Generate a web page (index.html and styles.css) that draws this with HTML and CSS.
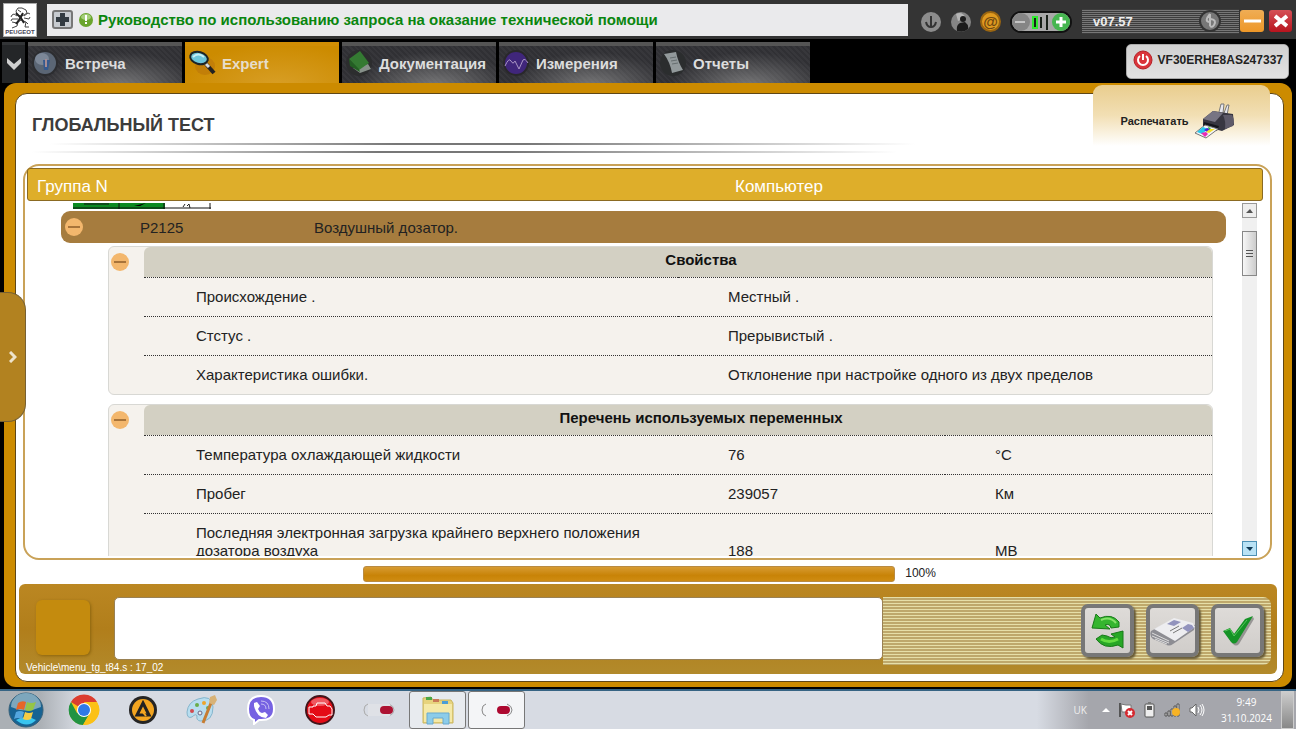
FILE: index.html
```html
<!DOCTYPE html>
<html lang="ru">
<head>
    <meta charset="UTF-8">
    <meta name="viewport" content="width=device-width, initial-scale=1.0">
    <title>Глобальный тест</title>
    <link rel="stylesheet" href="styles.css">
</head>
<body>
    <!-- Top bar -->
    <header class="top-bar">
        <div class="brand">
            <svg width="24" height="22" viewBox="0 0 24 22" fill="none" stroke="#444" stroke-width="1">
                <path d="M8 4l2-3 4 0 4 2 1 3-3 2-3 1-4-1zM10 3l3 2M14 8l-1 5-4 3-5-1M9 9L6 7 4 8l-1 2M10 12l-6 0-1 2M13 13l5 2-1 5 4 0M10 15l-1 4-5 2M16 9l4-3 2 1M16 11l5 1 1-2M18 15l2 2"/>
                <path d="M8 6l5 5 3 5M15 6l-4 7-3 4" stroke="#222" stroke-width="2"/>
            </svg>
            <span>PEUGEOT</span>
        </div>
        <div class="message">
            <button class="plus-button" aria-label="Добавить">
                <svg width="13" height="13" viewBox="0 0 13 13"><path d="M4 0h5v4h4v5H9v4H4V9H0V4h4z" fill="#333b42"/></svg>
            </button>
            <svg class="info" width="14" height="14" viewBox="0 0 14 14">
                <circle cx="7" cy="7" r="7" fill="#6aa52d"/>
                <ellipse cx="7" cy="4" rx="5" ry="3" fill="#a5cf7c"/>
                <path d="M6 2h2v6H6zM6 9h2v2H6z" fill="#fff"/>
            </svg>
            <span>Руководство по использованию запроса на оказание технической помощи</span>
        </div>
        <div class="tools">
            <button class="round" aria-label="Загрузка">
                <svg width="20" height="20" viewBox="0 0 20 20"><circle cx="10" cy="10" r="10" fill="#8c8c8c"/><path d="M10 4v11M5 10q1 5 5 5t5-5" fill="none" stroke="#333" stroke-width="2"/></svg>
            </button>
            <button class="round" aria-label="Пользователь">
                <svg width="20" height="20" viewBox="0 0 20 20"><circle cx="10" cy="10" r="10" fill="#858585"/><path d="M5 2q6-3 10 4L7 9z" fill="#b5b5b5"/><circle cx="12" cy="7" r="3" fill="#1c1c1c"/><path d="M6 19q-1-6 3-8l5-1q4 3 3 7-4 4-11 2z" fill="#1c1c1c"/></svg>
            </button>
            <button class="round at" aria-label="Почта">@</button>
            <div class="level">
                <svg width="62" height="22" viewBox="0 0 62 22">
                    <rect x="1" y="1" width="60" height="20" rx="10" fill="#a8a8a8" stroke="#111" stroke-width="2"/>
                    <circle cx="11" cy="11" r="9" fill="#858585"/>
                    <path d="M5 11h10" stroke="#c4c4c4" stroke-width="2"/>
                    <path d="M25 5v13" stroke="#30e830" stroke-width="6"/>
                    <path d="M25 7v9M31 6v11M37 4v15" stroke="#182018" stroke-width="2"/>
                    <circle cx="51" cy="11" r="9" fill="#46b650"/>
                    <path d="M51 6v10M46 11h10" stroke="#fff" stroke-width="3"/>
                </svg>
            </div>
        </div>
        <div class="version">
            <span>v07.57</span>
            <svg width="23" height="23" viewBox="0 0 23 23"><circle cx="11" cy="11" r="10" fill="#777" stroke="#333" stroke-width="2"/><path d="M11 4v12M11 4q-6 7-1 8M12 9q6 1 3 6-2 3-4 1" fill="none" stroke="#bbb" stroke-width="2"/></svg>
        </div>
        <button class="window-button minimize" aria-label="Свернуть"><svg width="17" height="4"><path d="M0 2h17" stroke="#fff" stroke-width="3"/></svg></button>
        <button class="window-button close" aria-label="Закрыть"><svg width="14" height="14" viewBox="0 0 14 14"><path d="M1 2l12 10M13 2L1 12" stroke="#fff" stroke-width="4"/></svg></button>
    </header>

    <!-- Tabs -->
    <nav class="tabs">
        <button class="tab-arrow" aria-label="Меню">
            <svg width="14" height="12" viewBox="0 0 14 12"><path d="M0 0l7 6 7-6v5l-7 7-7-7z" fill="#d0d0d0"/></svg>
        </button>
        <a href="#" class="tab">
            <svg width="28" height="28" viewBox="0 0 28 28"><circle cx="14" cy="14" r="13" fill="#2c2d30"/><circle cx="14" cy="14" r="11" fill="#5b6675"/><ellipse cx="11" cy="10" rx="7" ry="6" fill="#7c8797"/><path d="M12 11h7l-2 10h-4z" fill="#35598e"/><path d="M15 10v8" stroke="#a68c94" stroke-width="2"/></svg>
            Встреча
        </a>
        <a href="#" class="tab active">
            <svg width="28" height="28" viewBox="0 0 28 28"><ellipse cx="17" cy="17" rx="10" ry="9" fill="#c27f08"/><path d="M18 15l8 9" stroke="#222" stroke-width="4"/><path d="M18 15l3 3" stroke="#ddd" stroke-width="3"/><ellipse cx="11" cy="9" rx="9" ry="6" fill="#6ec6d9" stroke="#1d2528" stroke-width="2" transform="rotate(15 11 9)"/><path d="M5 8q5-5 11 0" stroke="#c6eef4" stroke-width="2" fill="none"/></svg>
            Expert
        </a>
        <a href="#" class="tab">
            <svg width="28" height="28" viewBox="0 0 28 28"><circle cx="14" cy="14" r="13" fill="#2c2d2e"/><path d="M13 17l10-2 3 5-11 4-7-5z" fill="#87918a"/><path d="M4 10L15 2l9 12-10 7z" fill="#347a32"/><path d="M4 10l1 7 10 6-1-3z" fill="#235f23"/></svg>
            Документация
        </a>
        <a href="#" class="tab">
            <svg width="28" height="28" viewBox="0 0 28 28"><circle cx="14" cy="14" r="13" fill="#29282b"/><circle cx="14" cy="14" r="11" fill="#40267b"/><path d="M3 17q4-9 6-5t4 0l4 8 4-9q2-2 5 3" fill="none" stroke="#aa96c4" stroke-width="1"/></svg>
            Измерения
        </a>
        <a href="#" class="tab">
            <svg width="28" height="28" viewBox="0 0 28 28"><circle cx="14" cy="14" r="13" fill="#2b2d2e"/><path d="M5 5l12-2q2 10 7 18l-11 3Q11 13 5 5z" fill="#92999b"/><path d="M11 9l6-1M12 12l6-1M13 15l6-1" stroke="#666e70"/></svg>
            Отчеты
        </a>
        <button class="vin">
            <svg width="20" height="20" viewBox="0 0 20 20"><circle cx="10" cy="10" r="9" fill="#d9343a" stroke="#b52026" stroke-width="1"/><path d="M7 6a5 5 0 1 0 6 0M10 4v6" fill="none" stroke="#fff" stroke-width="2"/></svg>
            VF30ERHE8AS247337
        </button>
    </nav>

    <!-- Main frame -->
    <main class="frame">
        <div class="panel">
            <div class="heading">
                <h1>ГЛОБАЛЬНЫЙ ТЕСТ</h1>
                <div class="rule rule-top"></div>
                <div class="rule rule-bottom"></div>
            </div>
            <button class="print">
                Распечатать
                <svg width="42" height="36" viewBox="0 0 42 36">
                    <path d="M25 9l2-8 3 0-1 9M30 10l3-8 2 0-2 10" fill="#e7e7ef" stroke="#777" stroke-width="1"/>
                    <path d="M9 16l10-8 20 3 1 11-12 6-19-5z" fill="#383641"/>
                    <path d="M9 16l10-8 10 2-8 9z" fill="#777483"/>
                    <path d="M29 12l9 0q3 5 1 11l-8 3q1-8-2-14z" fill="#5e5a69"/>
                    <path d="M10 19l15 4-2 5-14-5z" fill="#15151c"/>
                    <path d="M11 22l13 4-12 9-11-5z" fill="#f3f3f7" stroke="#777" stroke-width="1"/>
                    <path d="M9 24l5 2-6 5-5-2z" fill="#24c8ec"/><path d="M13 25l4 1-4 3-3-2z" fill="#4826df"/><path d="M12 29l4-3 5 0-6 4z" fill="#f4df25"/><path d="M7 30l5-1 2 2-3 3z" fill="#e92bb2"/><path d="M14 24l3 1-2 2z" fill="#32bb42"/>
                </svg>
            </button>

            <section class="results">
                <div class="results-header">
                    <span>Группа N</span>
                    <span>Компьютер</span>
                </div>
                <div class="results-body">
                    <div class="results-list">
                        <svg class="strip" width="138" height="6" viewBox="0 0 138 6">
                            <path d="M0 0h92v6H0z" fill="#0b8a22"/><path d="M92 0h46v6H92z" fill="#fff"/>
                            <path d="M0 5h138M11 1h25M137 0v6M46 0v6M91 0v6" stroke="#111" fill="none"/><path d="M61 3l12-3-6 3z"/>
                            <path d="M110 4l2-3M114 3l2-2M117 5l-1-4" stroke="#222"/>
                        </svg>
                        <div class="fault">
                            <button class="minus" aria-label="Свернуть P2125"></button>
                            <span class="fault-code">P2125</span>
                            <span>Воздушный дозатор.</span>
                        </div>

                        <div class="group">
                            <button class="minus" aria-label="Свернуть свойства"></button>
                            <table>
                                <thead>
                                    <tr><th colspan="2">Свойства</th></tr>
                                </thead>
                                <tbody>
                                    <tr><td>Происхождение .</td><td>Местный .</td></tr>
                                    <tr><td>Стстус .</td><td>Прерывистый .</td></tr>
                                    <tr><td>Характеристика ошибки.</td><td>Отклонение при настройке одного из двух пределов</td></tr>
                                </tbody>
                            </table>
                        </div>

                        <div class="group">
                            <button class="minus" aria-label="Свернуть переменные"></button>
                            <table>
                                <colgroup><col class="col-half"><col><col></colgroup>
                                <thead>
                                    <tr><th colspan="3">Перечень используемых переменных</th></tr>
                                </thead>
                                <tbody>
                                    <tr><td>Температура охлаждающей жидкости</td><td>76</td><td>°C</td></tr>
                                    <tr><td>Пробег</td><td>239057</td><td>Км</td></tr>
                                    <tr><td>Последняя электронная загрузка крайнего верхнего положения дозатора воздуха</td><td>188</td><td>МВ</td></tr>
                                </tbody>
                            </table>
                        </div>
                    </div>
                    <div class="scrollbar">
                        <button class="scroll-button" aria-label="Вверх"><svg width="7" height="4"><path d="M0 4l4-4 3 4z" fill="#555"/></svg></button>
                        <div class="thumb"><i></i><i></i><i></i></div>
                        <button class="scroll-button down" aria-label="Вниз"><svg width="7" height="4"><path d="M0 0h7L4 4z" fill="#123a55"/></svg></button>
                    </div>
                </div>
            </section>

            <div class="progress-row">
                <div class="progress"></div>
                <span>100%</span>
            </div>

            <footer class="bottom-bar">
                <div class="square"></div>
                <textarea class="output" aria-label="Сообщение"></textarea>
                <div class="actions">
                    <button class="action" aria-label="Обновить">
                        <svg width="34" height="36" viewBox="0 0 34 36">
                            <path d="M1 15L5 1l4 4q12-5 19 4l0 5-8 1q-1-5-6-3l5 4z" fill="#35b52f" stroke="#187a18"/><path d="M10 7q9-4 15 3" stroke="#86e26a" stroke-width="2" fill="none"/>
                            <path d="M32 18l0 17-5-3Q13 37 5 26l6-4 5 1q4 3 8 1l-4-3z" fill="#28a726" stroke="#187a18"/><path d="M10 26q8 5 17 0" stroke="#66dd42" stroke-width="3" fill="none"/>
                        </svg>
                    </button>
                    <button class="action news" aria-label="Новости">
                        <svg width="46" height="34" viewBox="0 0 46 34">
                            <path d="M1 17l21-11 23 5-1 5-21 14q-4 3-8 0L3 25q-4-3-2-8z" fill="#8d8d93"/>
                            <path d="M4 15l20-11 19 5 2 4-20 14z" fill="#ededf0"/><path d="M2 19l17 8M2 22l17 7M5 25l12 5" stroke="#ddd" fill="none"/><path d="M17 10l7-4 7 2-7 4zM32 14l6-4 4 1 2 3-6 4z" fill="#9293bd"/><path d="M20 17l9-5M23 19l9-5" stroke="#777" stroke-width="1"/>
                        </svg>
                    </button>
                    <button class="action" aria-label="Подтвердить">
                        <svg width="34" height="32" viewBox="0 0 34 32"><path d="M4 18l6-3 5 5L26 5l6-3 1 2-15 25q-3 3-6 0z" fill="#555" opacity=".5"/><path d="M2 16l7-3 4 6L24 4l8-3-16 26q-3 3-6 0z" fill="#159326"/><path d="M4 16l5-2 4 7L26 5" fill="none" stroke="#56c75b" stroke-width="1"/></svg>
                    </button>
                </div>
                <span class="path">Vehicle\menu_tg_t84.s : 17_02</span>
            </footer>
        </div>
    </main>

    <button class="drawer" aria-label="Открыть панель">
        <svg width="8" height="12" viewBox="0 0 8 12"><path d="M1 1l5 5-5 5" fill="none" stroke="#eee3cb" stroke-width="3"/></svg>
    </button>

    <!-- Windows taskbar -->
    <nav class="taskbar">
        <button class="task start" aria-label="Пуск">
            <svg width="36" height="36" viewBox="0 0 36 36">
                <circle cx="18" cy="18" r="17" fill="#176393" stroke="#376078"/>
                <path d="M3 15a15 14 0 0 1 30 0q-15 7-30 0z" fill="#7da7bd"/><path d="M8 28q10-6 20 0-9 9-20 0z" fill="#39c5ef"/>
                <path d="M10 11q4-3 8-1l-2 8q-4-2-8 0z" fill="#e66628"/><path d="M19 10q4 2 9 0l-3 8q-4 2-8 0z" fill="#95c547"/><path d="M8 20q4-2 8 0l-2 7q-4-2-8 0z" fill="#53a6df"/><path d="M17 20q4 2 8 0l-2 7q-4 2-8 0z" fill="#f6cc45"/>
            </svg>
        </button>
        <button class="task" aria-label="Chrome">
            <svg width="32" height="32" viewBox="0 0 32 32">
                <circle cx="16" cy="16" r="15" fill="#fbc116"/><path d="M16 16L3 8a15 15 0 0 1 26 0z" fill="#dc3d30"/><path d="M3 8a15 15 0 0 0 12 23l7-12-6-3-7 3z" fill="#229342"/><path d="M16 8h13a15 15 0 0 1-14 23l7-12z" fill="#fbc116"/><circle cx="16" cy="16" r="7" fill="#fff"/><circle cx="16" cy="16" r="6" fill="#2f79e8"/>
            </svg>
        </button>
        <button class="task" aria-label="AIMP">
            <svg width="28" height="28" viewBox="0 0 28 28"><circle cx="14" cy="14" r="14" fill="#252525"/><circle cx="14" cy="14" r="11" fill="#f3a520"/><path d="M14 7l6 12H8z" fill="none" stroke="#222" stroke-width="3"/><path d="M13 15l4 5" stroke="#f3a520" stroke-width="2"/></svg>
        </button>
        <button class="task" aria-label="Paint">
            <svg width="32" height="30" viewBox="0 0 32 30"><path d="M12 4q14-5 15 8 0 15-13 14-4-1-3-5-1-3-5 1-5 2-5-5Q2 7 12 4z" fill="#b8ddef" stroke="#84b5cc"/><circle cx="11" cy="10" r="2" fill="#69ad4a"/><circle cx="18" cy="8" r="2" fill="#eea42b"/><circle cx="6" cy="16" r="2" fill="#d24b50"/><circle cx="14" cy="18" r="2" fill="#eee" stroke="#668"/><circle cx="22" cy="13" r="2" fill="#66aa58"/><path d="M17 28l8-20" stroke="#c77d32" stroke-width="3"/><path d="M23 8l1-6 5-2 2 5-3 5z" fill="#d8b276"/></svg>
        </button>
        <button class="task" aria-label="Viber">
            <svg width="30" height="30" viewBox="0 0 30 30"><path d="M15 1Q2 1 2 14q0 9 6 11v4l5-4q15 1 15-11Q28 1 15 1z" fill="#7662e2" stroke="#fff" stroke-width="2"/><path d="M8 8l3-1 3 4-2 3q1 3 4 4l3-1 3 3-2 3q-9 0-12-12z" fill="#fff"/><path d="M15 6q8 0 8 8M15 9q5 0 5 5" fill="none" stroke="#c8c0f4"/></svg>
        </button>
        <button class="task" aria-label="Диагностика">
            <svg width="30" height="30" viewBox="0 0 30 30"><circle cx="15" cy="15" r="14" fill="#e40b16" stroke="#43151b" stroke-width="2"/><ellipse cx="15" cy="7" rx="9" ry="4" fill="#ef5960"/><path d="M8 11h3l1-3h8l2 3h3l2 3v6h-3l-3 2H11l-3-3H4v-7h4z" fill="none" stroke="#fff" stroke-width="1"/></svg>
        </button>
        <button class="task" aria-label="DiagBox">
            <svg width="32" height="14" viewBox="0 0 32 14"><path d="M5 1Q1 2 1 7t4 6M26 1q5 2 5 6t-5 6" fill="none" stroke="#aaa"/><path d="M5 1h22v12H5z" fill="#dfe1e6"/><rect x="17" y="3" width="13" height="8" rx="4" fill="#ad1232"/></svg>
        </button>
        <button class="task open" aria-label="Проводник">
            <svg width="34" height="30" viewBox="0 0 34 30"><path d="M2 3l8-1 2 3h18l2 3v20H2z" fill="#e7d37d" stroke="#c9b55e"/><path d="M3 9h28v18H3z" fill="#f5e9a7"/><path d="M5 2h6v3H5z" fill="#4aa746"/><path d="M12 4h6v3h-6z" fill="#c97956"/><path d="M21 6h6v3h-6z" fill="#4c9ed5"/><path d="M6 18h22v11h-6v-6H12v6H6z" fill="#8ccce9" stroke="#69a9cf"/></svg>
        </button>
        <button class="task open current" aria-label="DiagBox окно">
            <svg width="32" height="14" viewBox="0 0 32 14"><path d="M5 1Q1 2 1 7t4 6M26 1q5 2 5 6t-5 6" fill="none" stroke="#888"/><rect x="16" y="3" width="13" height="8" rx="4" fill="#ad0830"/></svg>
        </button>

        <div class="tray">
            <span class="lang">UK</span>
            <svg width="8" height="4"><path d="M0 4l4-4 4 4z" fill="#fff"/></svg>
            <svg width="16" height="16" viewBox="0 0 16 16"><path d="M1 1v14" stroke="#555" stroke-width="2"/><path d="M2 2l5 1 5 0v7H3z" fill="#fff" stroke="#777"/><circle cx="11" cy="11" r="5" fill="#d52930"/><path d="M9 9l4 4M13 9l-4 4" stroke="#fff" stroke-width="2"/></svg>
            <svg width="11" height="16" viewBox="0 0 11 16"><rect x="1" y="2" width="9" height="13" rx="1" fill="#eee" stroke="#555"/><path d="M4 0h3v2H4z" fill="#777"/><path d="M3 4h5v4H3z" fill="#555"/></svg>
            <svg width="16" height="14" viewBox="0 0 16 14"><path d="M1 10h2v3H1zM4 8h2v5H4zM7 6h2v7H7zM10 3h2v10h-2zM13 1h2v12h-2z" fill="#ddd" stroke="#555"/><circle cx="12" cy="9" r="4" fill="#f7b326"/></svg>
            <svg width="16" height="14" viewBox="0 0 16 14"><path d="M1 5h2l4-4v12L3 9H1z" fill="#fff" stroke="#666"/><path d="M9 4q2 3 0 6M11 2q4 5 0 10M13 1q4 6 0 12" fill="none" stroke="#fff"/></svg>
            <div class="clock"><span>9:49</span><span>31.10.2024</span></div>
            <button class="show-desktop" aria-label="Рабочий стол"></button>
        </div>
    </nav>
</body>
</html>
```
FILE: styles.css
```css
* {
    box-sizing: border-box;
}

body {
    margin: 0;
    height: 100vh;
    display: flex;
    flex-direction: column;
    background-color: #000;
    color: #222;
    font-family: "Liberation Sans", Arial, sans-serif;
    font-size: 15px;
    overflow: hidden;
}

button {
    display: flex;
    align-items: center;
    justify-content: center;
    flex-shrink: 0;
    padding: 0;
    border: none;
    background: none;
    font-family: inherit;
    cursor: pointer;
}

svg {
    flex-shrink: 0;
}

/* Top bar */
.top-bar {
    display: flex;
    align-items: center;
    height: 39px;
    flex-shrink: 0;
    padding: 0 4px 0 3px;
    background-color: #343434;
}

.brand {
    display: flex;
    flex-direction: column;
    align-items: center;
    width: 34px;
    height: 34px;
    padding-top: 3px;
    background-color: #fff;
    border: 1px solid #aaa;
}

.brand span {
    color: #445;
    font-size: 6px;
    font-weight: bold;
    line-height: 6px;
}

.message {
    display: flex;
    align-items: center;
    flex: 1;
    height: 32px;
    margin-left: 10px;
    padding-left: 5px;
    background-color: #eaeaec;
    color: #0a860f;
    font-weight: bold;
    white-space: nowrap;
}

.plus-button {
    width: 21px;
    height: 19px;
    border: 2px solid #777;
    border-radius: 3px;
    background-color: #c7cbd0;
}

.info {
    margin: 0 5px 0 6px;
}

.tools {
    display: flex;
    align-items: center;
    gap: 9px;
    padding: 4px 10px 0 12px;
}

.round {
    width: 21px;
    height: 21px;
}

.at {
    border: 2px solid #9a6510;
    border-radius: 50%;
    background-color: #df9a20;
    color: #704810;
    font-size: 15px;
    font-weight: bold;
    line-height: 15px;
}

.level {
    display: flex;
}

.version {
    display: flex;
    align-items: center;
    justify-content: space-between;
    width: 157px;
    height: 25px;
    margin-top: 3px;
    padding: 0 17px 0 11px;
    background: repeating-linear-gradient(#3c3c3c 0, #3c3c3c 1px, #777 1px, #777 2px);
    color: #eee;
    font-size: 13px;
    font-weight: bold;
}

.window-button {
    width: 23px;
    height: 22px;
    margin: 3px 0 0 1px;
    border-radius: 3px;
}

.minimize {
    width: 24px;
    background: linear-gradient(#efad55, #ee9728);
}

.close {
    margin-left: 5px;
    background: linear-gradient(#d55056, #b8141e);
}

/* Tabs */
.tabs {
    display: flex;
    align-items: flex-end;
    gap: 3px;
    height: 44px;
    flex-shrink: 0;
    padding: 0 7px 0 2px;
}

.tab-arrow {
    width: 23px;
    height: 41px;
    background-color: #242628;
    border-top: 3px solid #333537;
}

.tab {
    display: flex;
    align-items: center;
    gap: 6px;
    width: 154px;
    height: 41px;
    padding: 0 0 3px 3px;
    border-top: 4px solid #555;
    background: radial-gradient(ellipse at 60% 110%, rgba(150, 150, 150, 0.7), rgba(80, 80, 80, 0) 60%),
        repeating-linear-gradient(45deg, #303034 0, #303034 2px, #37373b 2px, #37373b 4px);
    color: #ddd;
    font-weight: bold;
    text-decoration: none;
    white-space: nowrap;
}

.tab.active {
    border-top-color: #d08d04;
    background: radial-gradient(ellipse at 60% 110%, #d89f27, #cc8b00 75%);
    color: #e7ddca;
}

.vin {
    align-self: flex-start;
    gap: 5px;
    height: 35px;
    margin: 5px 0 0 auto;
    padding: 0 5px 4px 6px;
    border: 1px solid #aaa;
    border-radius: 5px;
    background: linear-gradient(#d0d0d0, #e2e2e2);
    color: #222;
    font-size: 12px;
    font-weight: bold;
}

/* Main frame */
.frame {
    display: flex;
    flex: 1;
    min-height: 0;
    margin: 0 4px 2px;
    padding: 10px 8px 5px 11px;
    border-radius: 12px;
    background-color: #cc8b00;
}

.panel {
    position: relative;
    display: flex;
    flex: 1;
    flex-direction: column;
    min-width: 0;
    border: 1px solid #5f4716;
    border-radius: 12px;
    background-color: #fff;
}

.heading {
    height: 70px;
    flex-shrink: 0;
    padding: 20px 16px 0;
}

.heading h1 {
    margin: 0;
    color: #3c3c3c;
    font-size: 18px;
    line-height: 22px;
}

.rule {
    height: 2px;
    width: 70%;
    background: linear-gradient(90deg, #fff, #777 40%, #777 55%, #fff);
}

.rule-top {
    margin: 7px 0 0 18px;
}

.rule-bottom {
    margin-top: 6px;
}

.print {
    position: absolute;
    top: -9px;
    right: 13px;
    gap: 5px;
    width: 177px;
    height: 61px;
    padding: 10px 7px 0 0;
    border-radius: 9px 9px 0 0;
    background: linear-gradient(#e9cd8e, #f2dfb4 50%, #fff);
    color: #222;
    font-size: 11px;
    font-weight: bold;
}

/* Results list */
.results {
    display: flex;
    flex: 1;
    flex-direction: column;
    min-height: 0;
    margin: 0 11px 0 7px;
    padding: 2px 7px 2px 2px;
    border: 2px solid #c9a258;
    border-radius: 16px;
}

.results-header {
    display: grid;
    grid-template-columns: 698px 1fr;
    height: 33px;
    flex-shrink: 0;
    padding: 8px 9px 0;
    border: 1px solid #8b6a22;
    border-radius: 3px;
    background-color: #deae2a;
    color: #fff;
    font-size: 17px;
    line-height: 20px;
}

.results-body {
    display: flex;
    flex: 1;
    gap: 16px;
    min-height: 0;
    padding: 2px 6px 0 34px;
}

.results-list {
    flex: 1;
    overflow: hidden;
}

.strip {
    display: block;
    margin-left: 12px;
}

.fault {
    display: flex;
    align-items: center;
    height: 32px;
    margin: 2px 0 3px;
    padding-left: 4px;
    border-radius: 9px;
    background-color: #a67c3e;
}

.fault-code {
    width: 174px;
    margin-left: 57px;
}

.minus {
    width: 18px;
    height: 18px;
    border-radius: 50%;
    background-color: #f3b76d;
}

.minus::before {
    content: "";
    width: 12px;
    height: 2px;
    background-color: #a8743a;
}

.group {
    display: flex;
    align-items: flex-start;
    gap: 15px;
    margin: 0 13px 9px 47px;
    padding-left: 2px;
    border: 1px solid #d8d8d4;
    border-radius: 6px;
    background-color: #f5f2ed;
}

.group .minus {
    margin-top: 6px;
}

table {
    width: 100%;
    table-layout: fixed;
    border-collapse: collapse;
}

.col-half {
    width: 50%;
}

th {
    height: 30px;
    padding: 0 0 4px 46px;
    border-radius: 6px 6px 0 0;
    background-color: #d3d0c3;
    color: #111;
    font-size: 15px;
}

td {
    height: 39px;
    padding: 10px 0 10px 50px;
    border-top: 1px dotted #333;
    font-size: 15px;
    line-height: 18px;
    vertical-align: bottom;
}

td:first-child {
    padding-left: 52px;
}

/* Scrollbar */
.scrollbar {
    display: flex;
    flex-direction: column;
    width: 15px;
    background-color: #f0f0f0;
}

.scroll-button {
    width: 15px;
    height: 15px;
    border: 1px solid #999;
    background-color: #eee;
}

.thumb {
    display: flex;
    flex-direction: column;
    align-items: center;
    justify-content: center;
    gap: 2px;
    height: 45px;
    margin-top: 13px;
    border: 1px solid #888;
    background: linear-gradient(90deg, #f7f7f7, #ccc);
}

.thumb i {
    width: 7px;
    height: 1px;
    background-color: #555;
}

.down {
    margin-top: auto;
    border-color: #4d91b5;
    background-color: #b9e2f5;
}

/* Progress */
.progress-row {
    display: flex;
    justify-content: center;
    gap: 10px;
    height: 24px;
    flex-shrink: 0;
    padding-top: 6px;
    font-size: 12px;
}

.progress {
    width: 42%;
    height: 16px;
    border: 1px solid #b98b42;
    border-radius: 3px;
    background: linear-gradient(#d79b32, #c88307 60%, #cf8c12);
}

/* Bottom bar */
.bottom-bar {
    position: relative;
    display: flex;
    flex-shrink: 0;
    height: 90px;
    margin: 0 6px 7px 3px;
    padding: 13px 6px 9px 17px;
    border-radius: 6px;
    background: linear-gradient(#bb8722, #b17e1b 50%, #b28a2b);
}

.square {
    width: 54px;
    height: 55px;
    margin: 3px 24px 0 0;
    border-radius: 6px;
    background-color: #c48b0e;
    box-shadow: 1px 1px 3px #8c650f;
}

.output {
    flex: 2;
    height: 63px;
    border: 1px solid #998154;
    border-radius: 5px;
    background-color: #fff;
    resize: none;
}

.actions {
    display: flex;
    flex: 1;
    justify-content: flex-end;
    gap: 12px;
    padding: 7px 7px 0 0;
    border-radius: 0 8px 8px 0;
    background: repeating-linear-gradient(#e6dfa8 0, #e6dfa8 1px, #bea86b 1px, #bea86b 3px);
}

.action {
    width: 53px;
    height: 53px;
    border: 4px solid #777;
    border-radius: 7px;
    background: linear-gradient(#dedbd8, #d0cdca);
    box-shadow: 2px 2px 2px #665a38;
}

.path {
    position: absolute;
    left: 7px;
    bottom: 0;
    color: #fff;
    font-size: 10px;
    line-height: 12px;
}

/* Side drawer */
.drawer {
    position: absolute;
    left: 0;
    top: 40%;
    width: 26px;
    height: 130px;
    border: 1px solid #776032;
    border-left: none;
    border-radius: 0 18px 18px 0;
    background-color: #b28220;
}

/* Taskbar */
.taskbar {
    display: flex;
    height: 40px;
    flex-shrink: 0;
    border-top: 2px solid #366484;
    background: linear-gradient(90deg, #abb0b5, #abb0b5 40px, #d7dbe3 80px, #d7dbe3 80%, #a5a6ac 84%);
}

.task {
    width: 57px;
    margin-right: 2px;
    border-radius: 3px;
}

.start {
    width: 52px;
    margin-right: 3px;
}

.open {
    border: 1px solid #777;
    background-color: #e8ebef;
}

.current {
    background-color: #f4f5f7;
}

.tray {
    display: flex;
    align-items: center;
    gap: 9px;
    margin-left: auto;
    color: #fff;
    font-family: "Open Sans", sans-serif;
    font-size: 10px;
}

.lang {
    margin-right: 6px;
    color: #eee;
}

.clock {
    display: flex;
    flex-direction: column;
    align-items: center;
    margin-left: 7px;
    line-height: 16px;
}

.show-desktop {
    align-self: stretch;
    width: 13px;
    margin: 0 2px 0 0;
    border: 1px solid #ccc;
    background: linear-gradient(#ccc, #888);
}
```
